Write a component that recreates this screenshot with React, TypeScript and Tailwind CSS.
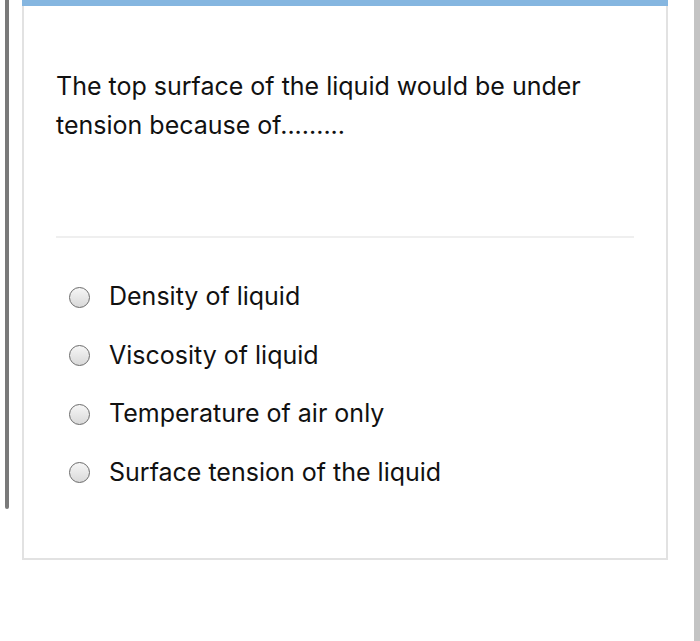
import { useState } from 'react';

const options = [
  'Density of liquid',
  'Viscosity of liquid',
  'Temperature of air only',
  'Surface tension of the liquid',
];

export default function App() {
  const [picked, setPicked] = useState<number | null>(null);

  return (
    <div className="relative h-[641px] w-[700px] overflow-hidden bg-white font-['Inter',sans-serif] text-[#111]">
      {/* page scroll indicators */}
      <div className="absolute left-[5px] top-0 h-[509px] w-[4px] rounded-b bg-[#7a7a7a]" />
      <div className="absolute right-0 top-0 h-full w-[6px] bg-[#c4c4c4]" />

      <div className="ml-[22px] w-[646px]">
        <div className="h-[6px] bg-[#85b6e0]" />
        <div className="h-[554px] border-x-2 border-b-2 border-[#e2e2e2] px-[32px]">
          <p className="pt-[61px] text-[25px] leading-[39px]">
            The top surface of the liquid would be under tension because of.........
          </p>
          <div className="mt-[91px] h-[2px] bg-[#efefef]" />
          <div className="flex flex-col gap-[18.5px] pt-[39px]">
            {options.map((o, i) => (
              <button
                key={o}
                type="button"
                onClick={() => setPicked(i)}
                className="flex h-[40px] items-center gap-[19px] pl-[13px] text-left text-[25px]"
              >
                <span className="flex size-[21px] items-center justify-center rounded-full border-[1.5px] border-[#6b6b6b] bg-gradient-to-b from-[#f6f6f6] to-[#d9d9d9]">
                  {picked === i && <span className="size-[9px] rounded-full bg-[#333]" />}
                </span>
                <span>{o}</span>
              </button>
            ))}
          </div>
        </div>
      </div>
    </div>
  );
}
